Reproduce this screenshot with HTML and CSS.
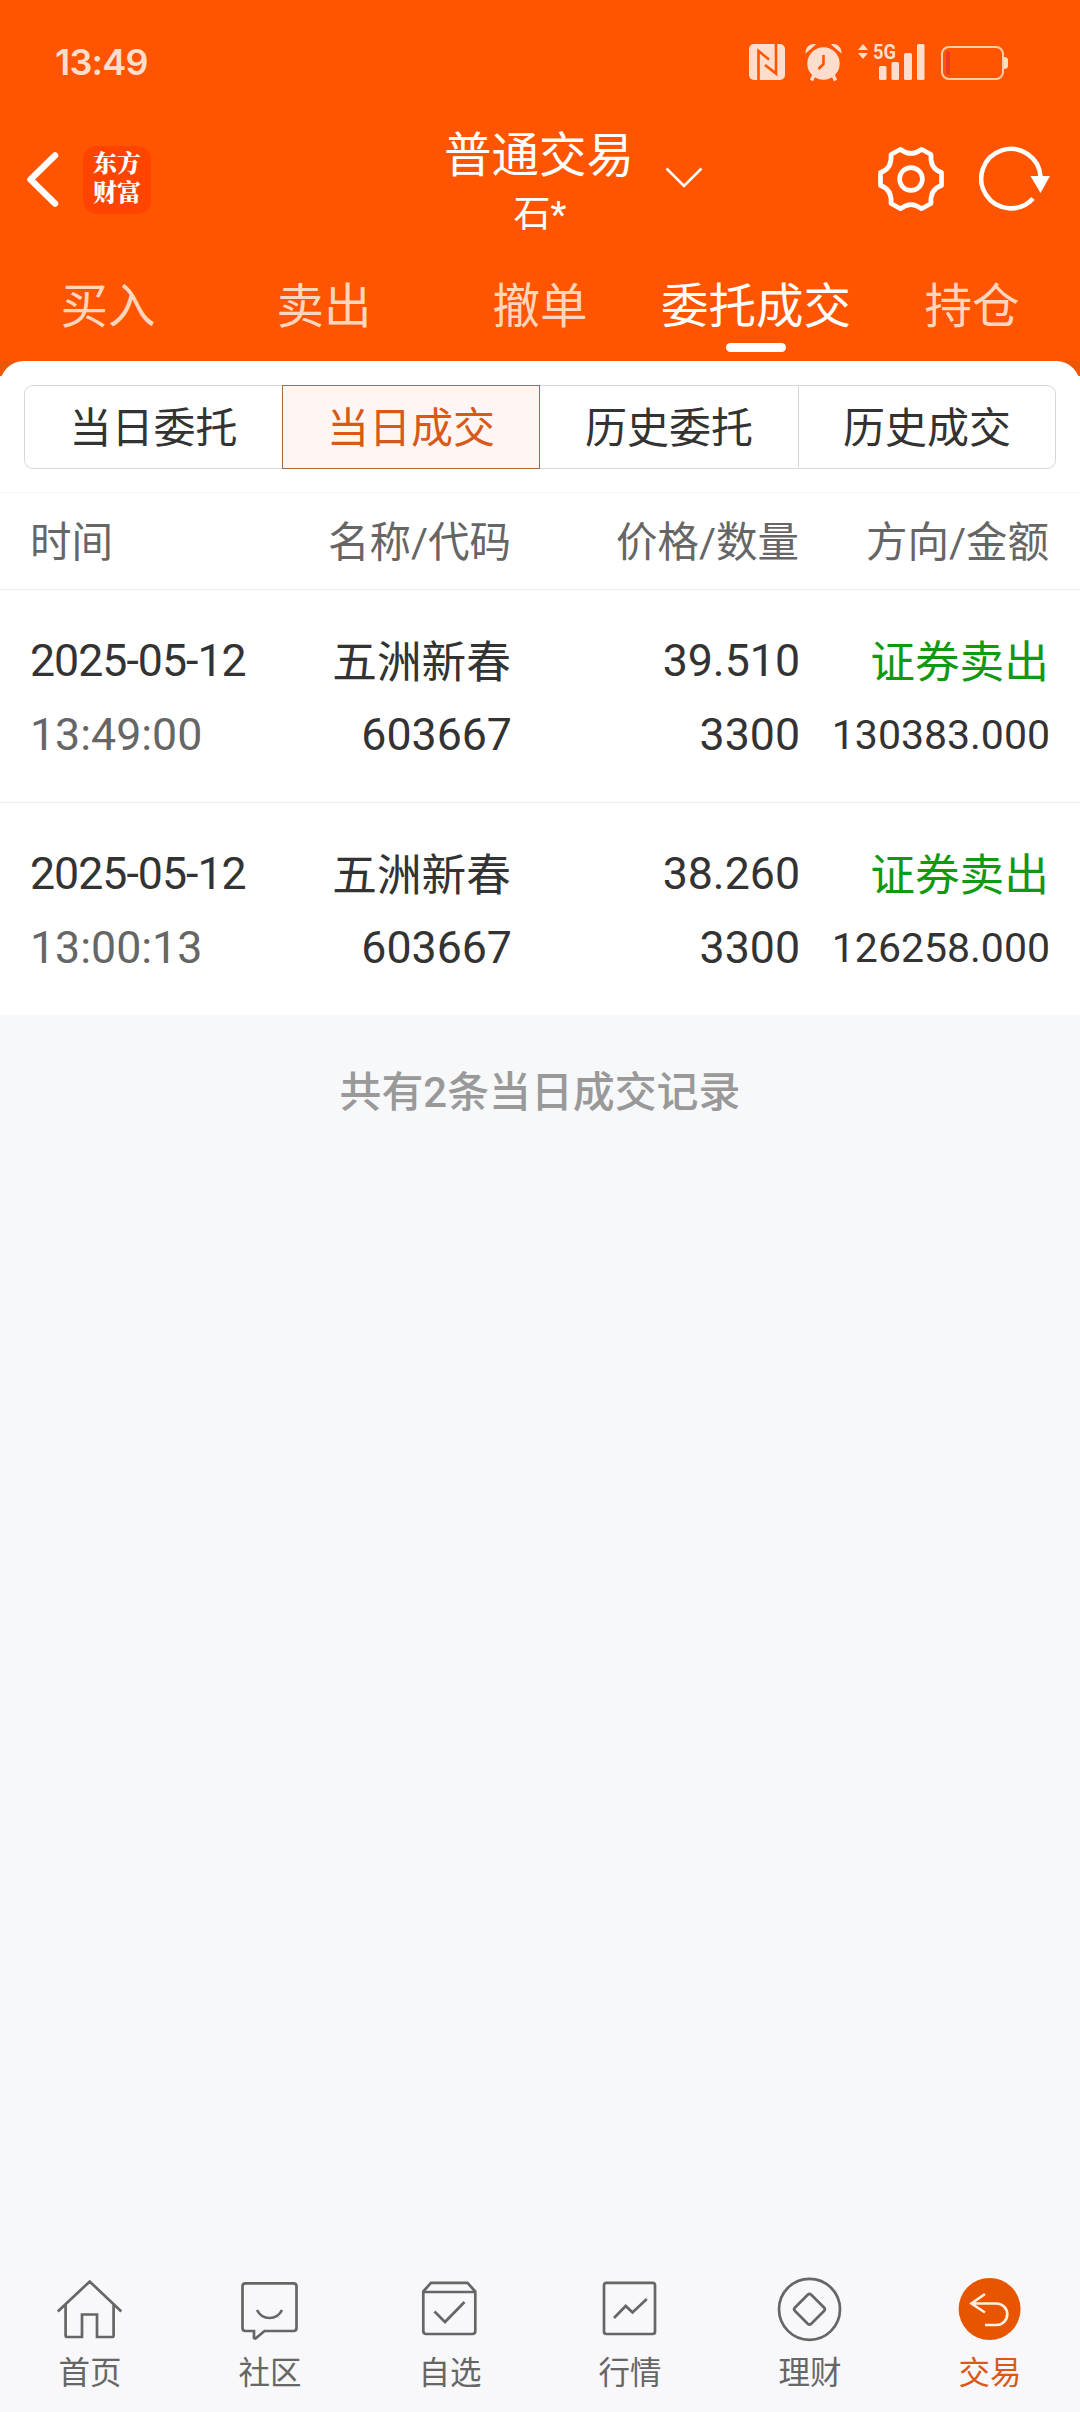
FILE: index.html
```html
<!DOCTYPE html>
<html lang="zh-CN">
<head>
<meta charset="utf-8">
<title>普通交易</title>
<link rel="stylesheet" href="styles.css">
</head>
<body>
<div class="app">
  <header class="top">
    <div class="status">
      <span class="clock">13:49</span>
      <div class="status-icons">
        <svg class="nfc" width="36" height="36" viewBox="749 44 36 36"><rect x="749" y="44" width="36" height="36" rx="5" fill="#ffddcc"/><path d="M758.5 80V51L769 59.5M776 44V73.500L765 65" fill="none" stroke="#ff5500" stroke-width="2.600"/></svg>
        <svg class="alarm" width="38" height="40" viewBox="805 42 38 40"><circle cx="823.5" cy="63.500" r="16.200" fill="#ffddcc"/><path d="M805.500 53.500C805 48 810 42.500 816 44.500ZM841.500 53.500C842 48 837 42.500 831 44.500Z" fill="#ffddcc"/><path d="M814 75L811.500 80.500M833 75L835.500 80.500" stroke="#ffddcc" stroke-width="3.500"/><path d="M823.500 55V64L818.500 69" fill="none" stroke="#ff5500" stroke-width="2.600"/></svg>
        <svg class="signal" width="68" height="46" viewBox="857 36 68 46"><path d="M858 50L863 44L868 50ZM858 53H868L863 59Z" fill="#ffddcc"/><g fill="#ffddcc"><rect x="879" y="66" width="7.500" height="14" rx="1.500"/><rect x="891.5" y="62" width="7.500" height="18" rx="1.500"/><rect x="904" y="53" width="8" height="27" rx="1.500"/><rect x="917" y="44" width="7.500" height="36" rx="1.500"/></g><text class="net" x="873" y="59" textLength="23" lengthAdjust="spacingAndGlyphs">5G</text></svg>
        <svg class="battery" width="68" height="36" viewBox="941 45 68 36"><rect x="942" y="47" width="61" height="32" rx="7" fill="none" stroke="#ffccaa" stroke-width="2"/><path d="M1004 57Q1008 57 1008 60V66Q1008 69 1004 69Z" fill="#ffddcc"/><rect x="946" y="51" width="4" height="24" rx="2" fill="#ee3b24"/></svg>
      </div>
    </div>
    <div class="titlebar">
      <div class="left">
        <svg width="36" height="58" viewBox="25 150 36 58"><path d="M55 155.500L30.500 179.500L55 203.500" fill="none" stroke="#fff" stroke-width="6.500" stroke-linecap="round" stroke-linejoin="round"/></svg>
        <div class="logo"><span>东方</span><span>财富</span></div>
      </div>
      <div class="account"><div class="title">普通交易</div><div class="user">石*</div></div>
      <div class="right">
        <svg class="drop" width="38" height="22" viewBox="665 166 38 22"><path d="M666.500 168.500L684 186L701.500 168.500" fill="none" stroke="#fff" stroke-width="2.600"/></svg>
        <svg class="gear" width="68" height="68" viewBox="876.500 145 68 68"><path d="M900 149.300Q910.500 157.500 921 149.300L930.500 154.500C929.500 165 933.500 170 941 172.500V185.500C933.500 188 929.500 193 930.500 203.500L921 208.700Q910.500 200.500 900 208.700L890.500 203.500C891.500 193 887.500 188 880 185.500V172.500C887.500 170 891.500 165 890.500 154.500Z" fill="none" stroke="#fff" stroke-width="4.700" stroke-linejoin="round"/><circle cx="910.500" cy="179" r="11.400" fill="none" stroke="#fff" stroke-width="4.600"/></svg>
        <svg class="refresh" width="72" height="68" viewBox="979 145 72 68"><path d="M1033 198.500A29.700 29.700 0 1 1 1040.600 177" fill="none" stroke="#fff" stroke-width="4.600"/><path d="M1030.500 176H1050L1040.500 193Z" fill="#fff"/></svg>
      </div>
    </div>
    <nav class="tabs">
      <span>买入</span><span>卖出</span><span>撤单</span><span class="on">委托成交</span><span>持仓</span>
    </nav>
  </header>
  <main class="panel">
    <div class="segments">
      <span>当日委托</span><span class="on">当日成交</span><span>历史委托</span><span>历史成交</span>
    </div>
    <div class="grid head"><span>时间</span><span>名称/代码</span><span>价格/数量</span><span>方向/金额</span></div>
    <div class="grid row">
      <div><span class="date">2025-05-12</span><span class="time">13:49:00</span></div>
      <div><span class="cn">五洲新春</span><span>603667</span></div>
      <div><span>39.510</span><span>3300</span></div>
      <div><span class="cn sell">证券卖出</span><span class="amount">130383.000</span></div>
    </div>
    <div class="grid row">
      <div><span class="date">2025-05-12</span><span class="time">13:00:13</span></div>
      <div><span class="cn">五洲新春</span><span>603667</span></div>
      <div><span>38.260</span><span>3300</span></div>
      <div><span class="cn sell">证券卖出</span><span class="amount">126258.000</span></div>
    </div>
  </main>
  <p class="summary">共有2条当日成交记录</p>
  <nav class="bottom">
    <div class="item"><svg width="70" height="66" viewBox="55 2276 70 66"><path d="M57.800 2311.500L89.700 2281.500L121.300 2311.500M65.600 2305V2335.500Q65.600 2337 67.500 2337H82V2314.500H97V2337H112Q113.600 2337 113.600 2335.500V2305"/></svg><span>首页</span></div>
    <div class="item"><svg width="70" height="66" viewBox="235 2276 70 66"><path d="M245.500 2283.300H293.500Q296.500 2283.300 296.500 2286.300V2328Q296.500 2331 293.500 2331H264.500L255.500 2338.500L254 2338V2331H245.500Q242.500 2331 242.500 2328V2286.300Q242.500 2283.300 245.500 2283.300ZM257 2310Q261 2318 269.500 2318Q278 2318 282 2310"/></svg><span>社区</span></div>
    <div class="item"><svg width="70" height="66" viewBox="415 2276 70 66"><path d="M423.300 2291.500L431 2282.800H467.500L475.300 2291.500V2331Q475.300 2334 472.300 2334H426.300Q423.300 2334 423.300 2331ZM423.300 2292H475.300M434.500 2311.500L445 2322L464.500 2302"/></svg><span>自选</span></div>
    <div class="item"><svg width="70" height="66" viewBox="595 2276 70 66"><rect x="604" y="2282.800" width="51" height="51.200" rx="2.500"/><path d="M614 2318L625.700 2306L632.500 2312.500L646.800 2299"/></svg><span>行情</span></div>
    <div class="item"><svg width="70" height="66" viewBox="775 2276 70 66"><circle cx="809.500" cy="2309.300" r="30.500"/><rect x="798" y="2297.800" width="23" height="23" rx="2.500" transform="rotate(45 809.500 2309.300)"/></svg><span>理财</span></div>
    <div class="item on"><svg width="70" height="66" viewBox="955 2276 70 66"><circle class="disc" cx="989.600" cy="2309" r="31"/><path d="M985 2294L971.500 2303.500L985 2312.500M972 2303.500H996.500A10.700 10.700 0 0 1 996.500 2325H985"/></svg><span>交易</span></div>
  </nav>
</div>
</body>
</html>
```
FILE: styles.css
```css
* { box-sizing: border-box; }
body { margin: 0; }
.app {
  display: flex;
  flex-direction: column;
  width: 1080px;
  height: 2412px;
  background: #f7f8fa;
  color: #333;
  font-family: Roboto, "Noto Sans CJK SC", sans-serif;
}
svg { display: block; flex: none; }
.top { height: 376px; background: linear-gradient(#ff5500 361px, #eb5707 361px); color: #fff; flex: none; }
.status { display: flex; justify-content: space-between; height: 124px; padding: 36px 71px 0 55px; }
.clock { margin-top: 6px; font: 600 36px/40px Inter, sans-serif; letter-spacing: -0.8px; color: #ffddcc; }
.status-icons { display: flex; align-items: flex-start; }
.nfc { margin: 8px 20px 0 0; }
.alarm { margin: 6px 14px 0 0; }
.signal { margin-right: 16px; }
.battery { margin-top: 9px; }
.net { font: 700 21px Roboto, sans-serif; fill: #ffddcc; }
.titlebar { display: grid; grid-template-columns: 1fr 240px 1fr; height: 130px; }
.left { display: flex; align-items: flex-start; padding: 26px 0 0 25px; }
.logo {
  display: flex;
  flex-direction: column;
  width: 68px;
  height: 68px;
  margin: -4px 0 0 22px;
  padding-top: 1px;
  border-radius: 14px;
  background: #ff4400;
  font: 900 24px/29px "Noto Serif CJK SC", "Noto Sans CJK SC", sans-serif;
  text-align: center;
}
.account { text-align: center; }
.title { margin-left: -2px; padding-top: 2px; font-size: 47.500px; line-height: 60px; white-space: nowrap; }
.user { font-size: 37px; line-height: 46px; padding-top: 6px; }
.right { display: flex; padding: 21px 0 0 5px; }
.drop { margin: 21px 173.5px 0 0; }
.gear { margin-right: 34.500px; }
.tabs { display: grid; grid-template-columns: repeat(5, 1fr); height: 98px; }
.tabs span { display: flex; flex-direction: column; align-items: center; height: 98px; padding-top: 18px; font-size: 47.500px; line-height: 70px; color: #ffd5bd; }
.tabs .on { color: #fff; }
.tabs .on::after { content: ""; width: 60px; height: 9px; margin-top: 1px; border-radius: 4.500px; background: #fff; }
.panel { flex: none; height: 654px; margin-top: -15px; padding-top: 24px; border-radius: 24px 24px 0 0; background: #fff; }
.segments { display: grid; grid-template-columns: repeat(4, 258px); width: 1032px; height: 84px; margin: 0 24px; }
.segments span { height: 84px; padding-top: 2px; border: 1px solid #d8d8d8; font-size: 42px; line-height: 82px; text-align: center; }
.segments span:first-child { border-radius: 9px 0 0 9px; border-right: 0; }
.segments span:last-child { border-radius: 0 9px 9px 0; }
.segments span:nth-child(3) { border-left: 0; border-right: 0; }
.segments .on { border-color: #a5683f; background: #fff6f3; color: #d9591a; }
.grid { display: grid; grid-template-columns: 231px 250px 288px 250px; padding: 0 30px; border-bottom: 1px solid #ececec; }
.grid > :nth-child(n+2) { text-align: right; }
.head { height: 98px; margin-top: 23px; border-top: 1px solid #f6f6f6; font-size: 41.500px; line-height: 99px; color: #666; white-space: nowrap; }
.row { height: 213px; padding-top: 34px; font-size: 44.700px; }
.row div > span { display: block; height: 74px; line-height: 74px; white-space: nowrap; }
.row div > .cn { padding-top: 2px; }
.row .cn + span { margin-top: 0; }
.row:last-child { border-bottom: 0; }
.date { letter-spacing: -1px; }
.time { color: #666; }
.row .sell { color: #119911; }
.row .amount { font-size: 41px; }
.row div > span:not(.date):not(.time):not(.cn) { position: relative; left: 1px; }
.summary { flex: 1; margin: 0; padding-top: 48px; font-size: 41.900px; line-height: 60px; font-weight: 500; color: #999; text-align: center; }
.bottom { display: grid; grid-template-columns: repeat(6, 180px); height: 136px; background: #f8f8fb; }
.item { display: flex; flex-direction: column; align-items: center; color: #666; font-size: 31.500px; line-height: 44px; }
.item svg { fill: none; stroke: #666; stroke-width: 2.700; }
.item span { margin-top: 10px; }
.item.on { color: #d9591a; }
.item.on svg { stroke: #fff0e0; }
.item.on .disc { fill: #e85500; stroke: none; }
```
